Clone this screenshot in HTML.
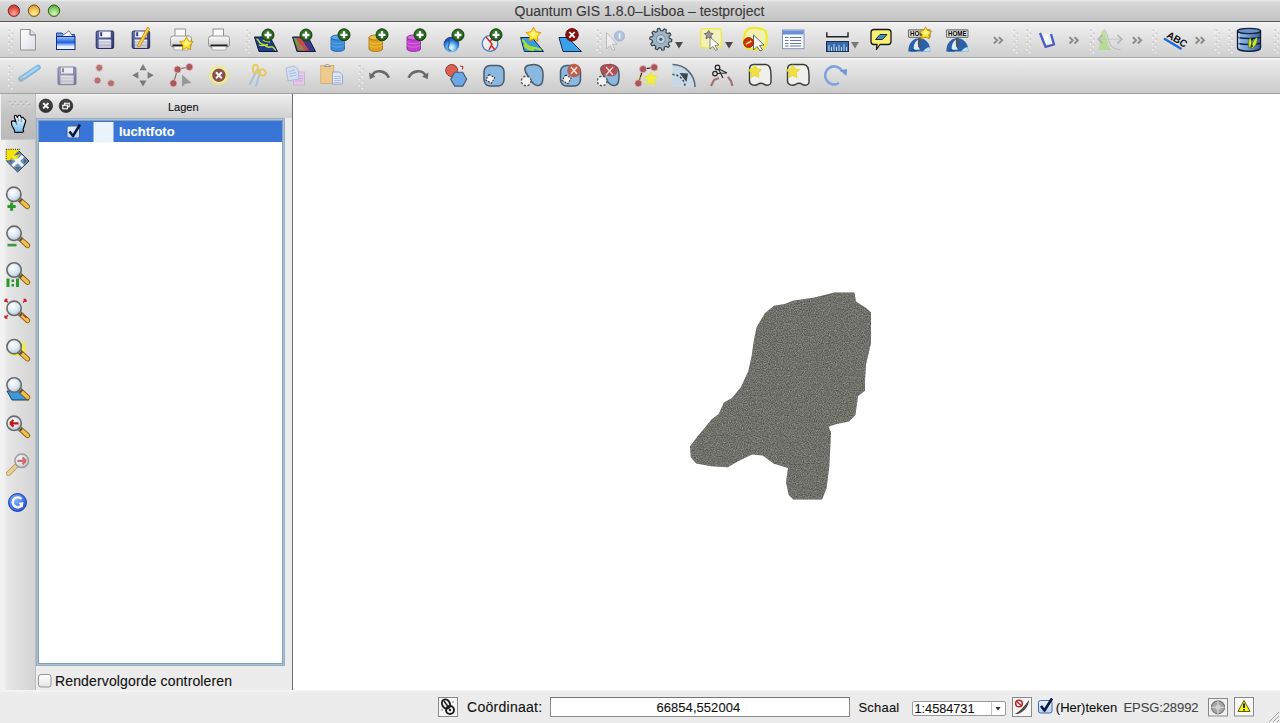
<!DOCTYPE html>
<html><head><meta charset="utf-8">
<style>
*{margin:0;padding:0;box-sizing:border-box}
html,body{width:1280px;height:723px;overflow:hidden;background:#ececec;font-family:"Liberation Sans",sans-serif;position:relative}
.abs{position:absolute}
.txt{position:absolute;white-space:nowrap;line-height:1;-webkit-text-stroke:0.12px currentColor}
#title{left:0;top:0;width:1280px;height:22px;background:linear-gradient(#ececec 0px,#d9d9d9 2px,#c2c2c2 21px);border-bottom:1px solid #555}
#tb1{left:0;top:22px;width:1280px;height:36px;background:linear-gradient(#f0f0f0,#cfcfcf);border-bottom:1px solid #a4a4a4;border-top:1px solid #f8f8f8}
#tb2{left:0;top:58px;width:1280px;height:36px;background:linear-gradient(#ececec,#cbcbcb);border-bottom:1px solid #a0a0a0;border-top:1px solid #fafafa}
#lefttb{left:0;top:94px;width:36px;height:597px;background:linear-gradient(90deg,#f2f2f2 0px,#f2f2f2 4px,#e6e6e6 7px,#d4d4d4 35px);border-right:1px solid #bdbdbd}
#panbtn{left:1px;top:94px;width:34px;height:46px;background:linear-gradient(#d6d6d6,#c6c6c6 40%,#b9b9b9);border-bottom:1px solid #c8c8c8}
#panel{left:36px;top:94px;width:256px;height:597px;background:#ececec}
#ptitle{left:0;top:0;width:256px;height:24px;background:linear-gradient(#fafafa 0px,#ececec 2px,#d2d2d2 23px)}
#tree{left:2px;top:26px;width:245px;height:544px;background:#fff;border:1px solid #86a0bc;box-shadow:0 0 0 1px #a8c2dc,0 0 0 2px #9cadc0}
#selrow{left:39px;top:121px;width:243px;height:21px;background:#3875d7}
#splitter{left:292px;top:94px;width:1px;height:597px;background:#6f6f6f}
#canvas{left:293px;top:94px;width:987px;height:597px;background:#fff}
#status{left:0;top:690px;width:1280px;height:33px;background:linear-gradient(#f6f6f6 0px,#ececec 3px)}

</style></head><body>
<div id="title" class="abs"></div>
<div class="txt" style="left:514.5px;top:4px;font-size:14px;letter-spacing:0px;color:#3a3a3a">Quantum GIS 1.8.0–Lisboa – testproject</div>
<div id="tb1" class="abs"></div>
<div id="tb2" class="abs"></div>
<div id="lefttb" class="abs"></div>
<div id="panbtn" class="abs"></div>
<div id="panel" class="abs">
  <div id="ptitle" class="abs"></div>
  <div id="tree" class="abs"></div>
</div>
<div class="txt" style="left:168px;top:102px;font-size:11px;color:#111">Lagen</div>
<div id="selrow" class="abs"></div>
<div class="txt" style="left:119px;top:125px;font-size:13px;font-weight:bold;color:#fff">luchtfoto</div>
<div class="txt" style="left:55px;top:674px;font-size:14px;letter-spacing:0.14px;color:#111">Rendervolgorde controleren</div>
<div id="splitter" class="abs"></div>
<div id="canvas" class="abs"></div>
<div id="status" class="abs"></div>
<div class="txt" style="left:467px;top:700px;font-size:14px;letter-spacing:0.28px;color:#111">Coördinaat:</div>
<div class="abs" style="left:550px;top:697px;width:300px;height:20px;background:#fff;border:1px solid #8a8a8a;border-top-color:#777"></div>
<div class="txt" style="left:656.5px;top:701px;font-size:13px;letter-spacing:0.05px;color:#111">66854,552004</div>
<div class="txt" style="left:858.5px;top:701px;font-size:13px;letter-spacing:0.2px;color:#111">Schaal</div>
<div class="abs" style="left:912px;top:701px;width:94px;height:15px;background:#fff;border:1px solid #9a9a9a;border-radius:2px"></div>
<div class="abs" style="left:991px;top:702px;width:1px;height:13px;background:#c8c8c8"></div>
<div class="txt" style="left:914.5px;top:703px;font-size:12.7px;color:#111">1:4584731</div>
<div class="txt" style="left:1055.8px;top:701px;font-size:13px;letter-spacing:0px;color:#111">(Her)teken</div>
<div class="txt" style="left:1123.5px;top:701px;font-size:13px;letter-spacing:-0.1px;color:#444">EPSG:28992</div>

<svg id="ov" width="1280" height="723" viewBox="0 0 1280 723" style="position:absolute;left:0;top:0">
<defs>
<radialGradient id="gred" cx="50%" cy="75%" r="70%"><stop offset="0" stop-color="#f8a8a0"/><stop offset="0.6" stop-color="#e45a4c"/><stop offset="1" stop-color="#c83a30"/></radialGradient>
<radialGradient id="gyel" cx="50%" cy="75%" r="70%"><stop offset="0" stop-color="#fff0a0"/><stop offset="0.6" stop-color="#f4c050"/><stop offset="1" stop-color="#d89a30"/></radialGradient>
<radialGradient id="ggrn" cx="50%" cy="75%" r="70%"><stop offset="0" stop-color="#d8f8b8"/><stop offset="0.6" stop-color="#90d070"/><stop offset="1" stop-color="#5aa840"/></radialGradient>
<radialGradient id="gplus" cx="45%" cy="40%" r="60%"><stop offset="0" stop-color="#3a8a30"/><stop offset="1" stop-color="#1e5418"/></radialGradient>
<linearGradient id="gdoc" x1="0" y1="0" x2="1" y2="1"><stop offset="0" stop-color="#ffffff"/><stop offset="1" stop-color="#dcdce8"/></linearGradient>
<linearGradient id="gfold" x1="0" y1="0" x2="0" y2="1"><stop offset="0" stop-color="#a8c8f8"/><stop offset="0.45" stop-color="#1a60e0"/><stop offset="0.75" stop-color="#e0e8ff"/><stop offset="1" stop-color="#f8f8ff"/></linearGradient>
<linearGradient id="gflop" x1="0" y1="0" x2="1" y2="1"><stop offset="0" stop-color="#6a78b0"/><stop offset="1" stop-color="#2a3068"/></linearGradient>
<linearGradient id="glabel" x1="0" y1="0" x2="0" y2="1"><stop offset="0" stop-color="#f0f0f8"/><stop offset="1" stop-color="#c0c0d4"/></linearGradient>
<linearGradient id="gprint" x1="0" y1="0" x2="0" y2="1"><stop offset="0" stop-color="#fafafa"/><stop offset="1" stop-color="#c8c8c8"/></linearGradient>
<radialGradient id="gstar" cx="50%" cy="50%" r="55%"><stop offset="0" stop-color="#ffffa0"/><stop offset="0.6" stop-color="#f8e020"/><stop offset="1" stop-color="#e8a800"/></radialGradient>
<radialGradient id="gglobe" cx="50%" cy="70%" r="60%"><stop offset="0" stop-color="#f0fcff"/><stop offset="0.35" stop-color="#8ad0f8"/><stop offset="0.75" stop-color="#2a78d0"/><stop offset="1" stop-color="#1a4aa0"/></radialGradient>
<linearGradient id="gdome" x1="0" y1="0" x2="0" y2="1"><stop offset="0" stop-color="#2a6ab8"/><stop offset="1" stop-color="#1a4a98"/></linearGradient>
<linearGradient id="gdb" x1="0" y1="0" x2="1" y2="0"><stop offset="0" stop-color="#9ac0ea"/><stop offset="0.5" stop-color="#6a98d0"/><stop offset="1" stop-color="#3a60a0"/></linearGradient>
<radialGradient id="glens" cx="40%" cy="35%" r="70%"><stop offset="0" stop-color="#ffffff"/><stop offset="0.6" stop-color="#d8e4f0"/><stop offset="1" stop-color="#a8b8c8"/></radialGradient>
<linearGradient id="ghand" x1="0" y1="0" x2="0" y2="1"><stop offset="0" stop-color="#f0f8ff"/><stop offset="1" stop-color="#78c0f0"/></linearGradient>
<radialGradient id="grefresh" cx="40%" cy="35%" r="70%"><stop offset="0" stop-color="#8ab8ff"/><stop offset="1" stop-color="#2050d0"/></radialGradient>
<linearGradient id="gchk" x1="0" y1="0" x2="0" y2="1"><stop offset="0" stop-color="#e8f2ff"/><stop offset="1" stop-color="#b8d4f4"/></linearGradient>
<linearGradient id="gchk0" x1="0" y1="0" x2="0" y2="1"><stop offset="0" stop-color="#ffffff"/><stop offset="1" stop-color="#e4e4e4"/></linearGradient>
<radialGradient id="gdbtn" cx="50%" cy="40%" r="60%"><stop offset="0" stop-color="#5a5a5a"/><stop offset="1" stop-color="#2a2a2a"/></radialGradient>
<filter id="mapnoise" x="0" y="0" width="100%" height="100%" filterUnits="objectBoundingBox" color-interpolation-filters="sRGB">
<feTurbulence type="fractalNoise" baseFrequency="0.85" numOctaves="2" seed="7" result="n"/>
<feColorMatrix in="n" type="matrix" values="1 0 0 0 0  1 0 0 0 0  1 0 0 0 0  0 0 0 0 1" result="g"/>
<feComponentTransfer in="g"><feFuncR type="linear" slope="1.15" intercept="-0.07"/><feFuncG type="linear" slope="1.15" intercept="-0.06"/><feFuncB type="linear" slope="1.15" intercept="-0.09"/></feComponentTransfer>
</filter>
</defs>
<circle cx="13.9" cy="10.7" r="5.7" fill="url(#gred)" stroke="#6a2a2a" stroke-width="1"/><circle cx="34" cy="10.7" r="5.7" fill="url(#gyel)" stroke="#6a5018" stroke-width="1"/><circle cx="54" cy="10.7" r="5.7" fill="url(#ggrn)" stroke="#2a5a1a" stroke-width="1"/><circle cx="9.3" cy="30.3" r="1.1" fill="#cdcdcd"/><circle cx="8.8" cy="31.8" r="0.8" fill="#fbfbfb"/><circle cx="12.3" cy="33.3" r="1.1" fill="#d0d0d0"/><circle cx="11.8" cy="34.8" r="0.8" fill="#fbfbfb"/><circle cx="9.3" cy="36.3" r="1.1" fill="#cdcdcd"/><circle cx="8.8" cy="37.8" r="0.8" fill="#fbfbfb"/><circle cx="12.3" cy="39.3" r="1.1" fill="#d0d0d0"/><circle cx="11.8" cy="40.8" r="0.8" fill="#fbfbfb"/><circle cx="9.3" cy="42.3" r="1.1" fill="#cdcdcd"/><circle cx="8.8" cy="43.8" r="0.8" fill="#fbfbfb"/><circle cx="12.3" cy="45.3" r="1.1" fill="#d0d0d0"/><circle cx="11.8" cy="46.8" r="0.8" fill="#fbfbfb"/><circle cx="9.3" cy="48.3" r="1.1" fill="#cdcdcd"/><circle cx="8.8" cy="49.8" r="0.8" fill="#fbfbfb"/><circle cx="12.3" cy="51.3" r="1.1" fill="#d0d0d0"/><circle cx="11.8" cy="52.8" r="0.8" fill="#fbfbfb"/><circle cx="246.8" cy="30.3" r="1.1" fill="#cdcdcd"/><circle cx="246.3" cy="31.8" r="0.8" fill="#fbfbfb"/><circle cx="249.8" cy="33.3" r="1.1" fill="#d0d0d0"/><circle cx="249.3" cy="34.8" r="0.8" fill="#fbfbfb"/><circle cx="246.8" cy="36.3" r="1.1" fill="#cdcdcd"/><circle cx="246.3" cy="37.8" r="0.8" fill="#fbfbfb"/><circle cx="249.8" cy="39.3" r="1.1" fill="#d0d0d0"/><circle cx="249.3" cy="40.8" r="0.8" fill="#fbfbfb"/><circle cx="246.8" cy="42.3" r="1.1" fill="#cdcdcd"/><circle cx="246.3" cy="43.8" r="0.8" fill="#fbfbfb"/><circle cx="249.8" cy="45.3" r="1.1" fill="#d0d0d0"/><circle cx="249.3" cy="46.8" r="0.8" fill="#fbfbfb"/><circle cx="246.8" cy="48.3" r="1.1" fill="#cdcdcd"/><circle cx="246.3" cy="49.8" r="0.8" fill="#fbfbfb"/><circle cx="249.8" cy="51.3" r="1.1" fill="#d0d0d0"/><circle cx="249.3" cy="52.8" r="0.8" fill="#fbfbfb"/><circle cx="597.8" cy="30.3" r="1.1" fill="#cdcdcd"/><circle cx="597.3" cy="31.8" r="0.8" fill="#fbfbfb"/><circle cx="600.8" cy="33.3" r="1.1" fill="#d0d0d0"/><circle cx="600.3" cy="34.8" r="0.8" fill="#fbfbfb"/><circle cx="597.8" cy="36.3" r="1.1" fill="#cdcdcd"/><circle cx="597.3" cy="37.8" r="0.8" fill="#fbfbfb"/><circle cx="600.8" cy="39.3" r="1.1" fill="#d0d0d0"/><circle cx="600.3" cy="40.8" r="0.8" fill="#fbfbfb"/><circle cx="597.8" cy="42.3" r="1.1" fill="#cdcdcd"/><circle cx="597.3" cy="43.8" r="0.8" fill="#fbfbfb"/><circle cx="600.8" cy="45.3" r="1.1" fill="#d0d0d0"/><circle cx="600.3" cy="46.8" r="0.8" fill="#fbfbfb"/><circle cx="597.8" cy="48.3" r="1.1" fill="#cdcdcd"/><circle cx="597.3" cy="49.8" r="0.8" fill="#fbfbfb"/><circle cx="600.8" cy="51.3" r="1.1" fill="#d0d0d0"/><circle cx="600.3" cy="52.8" r="0.8" fill="#fbfbfb"/><circle cx="1014.3" cy="30.3" r="1.1" fill="#cdcdcd"/><circle cx="1013.8" cy="31.8" r="0.8" fill="#fbfbfb"/><circle cx="1017.3" cy="33.3" r="1.1" fill="#d0d0d0"/><circle cx="1016.8" cy="34.8" r="0.8" fill="#fbfbfb"/><circle cx="1014.3" cy="36.3" r="1.1" fill="#cdcdcd"/><circle cx="1013.8" cy="37.8" r="0.8" fill="#fbfbfb"/><circle cx="1017.3" cy="39.3" r="1.1" fill="#d0d0d0"/><circle cx="1016.8" cy="40.8" r="0.8" fill="#fbfbfb"/><circle cx="1014.3" cy="42.3" r="1.1" fill="#cdcdcd"/><circle cx="1013.8" cy="43.8" r="0.8" fill="#fbfbfb"/><circle cx="1017.3" cy="45.3" r="1.1" fill="#d0d0d0"/><circle cx="1016.8" cy="46.8" r="0.8" fill="#fbfbfb"/><circle cx="1014.3" cy="48.3" r="1.1" fill="#cdcdcd"/><circle cx="1013.8" cy="49.8" r="0.8" fill="#fbfbfb"/><circle cx="1017.3" cy="51.3" r="1.1" fill="#d0d0d0"/><circle cx="1016.8" cy="52.8" r="0.8" fill="#fbfbfb"/><circle cx="1027.3" cy="30.3" r="1.1" fill="#cdcdcd"/><circle cx="1026.8" cy="31.8" r="0.8" fill="#fbfbfb"/><circle cx="1030.3" cy="33.3" r="1.1" fill="#d0d0d0"/><circle cx="1029.8" cy="34.8" r="0.8" fill="#fbfbfb"/><circle cx="1027.3" cy="36.3" r="1.1" fill="#cdcdcd"/><circle cx="1026.8" cy="37.8" r="0.8" fill="#fbfbfb"/><circle cx="1030.3" cy="39.3" r="1.1" fill="#d0d0d0"/><circle cx="1029.8" cy="40.8" r="0.8" fill="#fbfbfb"/><circle cx="1027.3" cy="42.3" r="1.1" fill="#cdcdcd"/><circle cx="1026.8" cy="43.8" r="0.8" fill="#fbfbfb"/><circle cx="1030.3" cy="45.3" r="1.1" fill="#d0d0d0"/><circle cx="1029.8" cy="46.8" r="0.8" fill="#fbfbfb"/><circle cx="1027.3" cy="48.3" r="1.1" fill="#cdcdcd"/><circle cx="1026.8" cy="49.8" r="0.8" fill="#fbfbfb"/><circle cx="1030.3" cy="51.3" r="1.1" fill="#d0d0d0"/><circle cx="1029.8" cy="52.8" r="0.8" fill="#fbfbfb"/><circle cx="1090.8" cy="30.3" r="1.1" fill="#cdcdcd"/><circle cx="1090.3" cy="31.8" r="0.8" fill="#fbfbfb"/><circle cx="1093.8" cy="33.3" r="1.1" fill="#d0d0d0"/><circle cx="1093.3" cy="34.8" r="0.8" fill="#fbfbfb"/><circle cx="1090.8" cy="36.3" r="1.1" fill="#cdcdcd"/><circle cx="1090.3" cy="37.8" r="0.8" fill="#fbfbfb"/><circle cx="1093.8" cy="39.3" r="1.1" fill="#d0d0d0"/><circle cx="1093.3" cy="40.8" r="0.8" fill="#fbfbfb"/><circle cx="1090.8" cy="42.3" r="1.1" fill="#cdcdcd"/><circle cx="1090.3" cy="43.8" r="0.8" fill="#fbfbfb"/><circle cx="1093.8" cy="45.3" r="1.1" fill="#d0d0d0"/><circle cx="1093.3" cy="46.8" r="0.8" fill="#fbfbfb"/><circle cx="1090.8" cy="48.3" r="1.1" fill="#cdcdcd"/><circle cx="1090.3" cy="49.8" r="0.8" fill="#fbfbfb"/><circle cx="1093.8" cy="51.3" r="1.1" fill="#d0d0d0"/><circle cx="1093.3" cy="52.8" r="0.8" fill="#fbfbfb"/><circle cx="1153.3" cy="30.3" r="1.1" fill="#cdcdcd"/><circle cx="1152.8" cy="31.8" r="0.8" fill="#fbfbfb"/><circle cx="1156.3" cy="33.3" r="1.1" fill="#d0d0d0"/><circle cx="1155.8" cy="34.8" r="0.8" fill="#fbfbfb"/><circle cx="1153.3" cy="36.3" r="1.1" fill="#cdcdcd"/><circle cx="1152.8" cy="37.8" r="0.8" fill="#fbfbfb"/><circle cx="1156.3" cy="39.3" r="1.1" fill="#d0d0d0"/><circle cx="1155.8" cy="40.8" r="0.8" fill="#fbfbfb"/><circle cx="1153.3" cy="42.3" r="1.1" fill="#cdcdcd"/><circle cx="1152.8" cy="43.8" r="0.8" fill="#fbfbfb"/><circle cx="1156.3" cy="45.3" r="1.1" fill="#d0d0d0"/><circle cx="1155.8" cy="46.8" r="0.8" fill="#fbfbfb"/><circle cx="1153.3" cy="48.3" r="1.1" fill="#cdcdcd"/><circle cx="1152.8" cy="49.8" r="0.8" fill="#fbfbfb"/><circle cx="1156.3" cy="51.3" r="1.1" fill="#d0d0d0"/><circle cx="1155.8" cy="52.8" r="0.8" fill="#fbfbfb"/><circle cx="1216.3" cy="30.3" r="1.1" fill="#cdcdcd"/><circle cx="1215.8" cy="31.8" r="0.8" fill="#fbfbfb"/><circle cx="1219.3" cy="33.3" r="1.1" fill="#d0d0d0"/><circle cx="1218.8" cy="34.8" r="0.8" fill="#fbfbfb"/><circle cx="1216.3" cy="36.3" r="1.1" fill="#cdcdcd"/><circle cx="1215.8" cy="37.8" r="0.8" fill="#fbfbfb"/><circle cx="1219.3" cy="39.3" r="1.1" fill="#d0d0d0"/><circle cx="1218.8" cy="40.8" r="0.8" fill="#fbfbfb"/><circle cx="1216.3" cy="42.3" r="1.1" fill="#cdcdcd"/><circle cx="1215.8" cy="43.8" r="0.8" fill="#fbfbfb"/><circle cx="1219.3" cy="45.3" r="1.1" fill="#d0d0d0"/><circle cx="1218.8" cy="46.8" r="0.8" fill="#fbfbfb"/><circle cx="1216.3" cy="48.3" r="1.1" fill="#cdcdcd"/><circle cx="1215.8" cy="49.8" r="0.8" fill="#fbfbfb"/><circle cx="1219.3" cy="51.3" r="1.1" fill="#d0d0d0"/><circle cx="1218.8" cy="52.8" r="0.8" fill="#fbfbfb"/><circle cx="1229.3" cy="30.3" r="1.1" fill="#cdcdcd"/><circle cx="1228.8" cy="31.8" r="0.8" fill="#fbfbfb"/><circle cx="1232.3" cy="33.3" r="1.1" fill="#d0d0d0"/><circle cx="1231.8" cy="34.8" r="0.8" fill="#fbfbfb"/><circle cx="1229.3" cy="36.3" r="1.1" fill="#cdcdcd"/><circle cx="1228.8" cy="37.8" r="0.8" fill="#fbfbfb"/><circle cx="1232.3" cy="39.3" r="1.1" fill="#d0d0d0"/><circle cx="1231.8" cy="40.8" r="0.8" fill="#fbfbfb"/><circle cx="1229.3" cy="42.3" r="1.1" fill="#cdcdcd"/><circle cx="1228.8" cy="43.8" r="0.8" fill="#fbfbfb"/><circle cx="1232.3" cy="45.3" r="1.1" fill="#d0d0d0"/><circle cx="1231.8" cy="46.8" r="0.8" fill="#fbfbfb"/><circle cx="1229.3" cy="48.3" r="1.1" fill="#cdcdcd"/><circle cx="1228.8" cy="49.8" r="0.8" fill="#fbfbfb"/><circle cx="1232.3" cy="51.3" r="1.1" fill="#d0d0d0"/><circle cx="1231.8" cy="52.8" r="0.8" fill="#fbfbfb"/><circle cx="1275.3" cy="30.3" r="1.1" fill="#cdcdcd"/><circle cx="1274.8" cy="31.8" r="0.8" fill="#fbfbfb"/><circle cx="1278.3" cy="33.3" r="1.1" fill="#d0d0d0"/><circle cx="1277.8" cy="34.8" r="0.8" fill="#fbfbfb"/><circle cx="1275.3" cy="36.3" r="1.1" fill="#cdcdcd"/><circle cx="1274.8" cy="37.8" r="0.8" fill="#fbfbfb"/><circle cx="1278.3" cy="39.3" r="1.1" fill="#d0d0d0"/><circle cx="1277.8" cy="40.8" r="0.8" fill="#fbfbfb"/><circle cx="1275.3" cy="42.3" r="1.1" fill="#cdcdcd"/><circle cx="1274.8" cy="43.8" r="0.8" fill="#fbfbfb"/><circle cx="1278.3" cy="45.3" r="1.1" fill="#d0d0d0"/><circle cx="1277.8" cy="46.8" r="0.8" fill="#fbfbfb"/><circle cx="1275.3" cy="48.3" r="1.1" fill="#cdcdcd"/><circle cx="1274.8" cy="49.8" r="0.8" fill="#fbfbfb"/><circle cx="1278.3" cy="51.3" r="1.1" fill="#d0d0d0"/><circle cx="1277.8" cy="52.8" r="0.8" fill="#fbfbfb"/><path d="M20.5,29.5 H30 L35.5,35 V50 H20.5 Z" fill="url(#gdoc)" stroke="#8a8a8a" stroke-width="0.9"/><path d="M30,29.5 V35 H35.5" fill="#e4e4e4" stroke="#6a6a6a" stroke-width="0.9"/><path d="M56.5,49.5 V33 H62 L63.5,34.5 H74.5 V49.5 Z" fill="#6a9ae0" stroke="#1a3a9a" stroke-width="0.9"/><path d="M59,38 L69,30.8 L73.5,37 Z" fill="#f8f8ff" stroke="#556" stroke-width="0.7"/><rect x="56.5" y="36.5" width="18.5" height="13" fill="url(#gfold)" stroke="#102e90" stroke-width="1"/><g><rect x="96.2" y="31" width="17.5" height="17.5" rx="1.5" fill="url(#gflop)" stroke="#1e2552" stroke-width="0.9"/><rect x="99.2" y="31.5" width="11.5" height="6" fill="#f4f6fc"/><rect x="100.2" y="32.2" width="2" height="4" fill="#3a4070"/><rect x="98.7" y="39.5" width="12.5" height="8.5" fill="url(#glabel)"/><path d="M98.7,42H111.2M98.7,45H111.2" stroke="#9da0b8" stroke-width="0.8"/></g><g><rect x="132.2" y="31" width="17.5" height="17.5" rx="1.5" fill="url(#gflop)" stroke="#1e2552" stroke-width="0.9"/><rect x="135.2" y="31.5" width="11.5" height="6" fill="#f4f6fc"/><rect x="136.2" y="32.2" width="2" height="4" fill="#3a4070"/><rect x="134.7" y="39.5" width="12.5" height="8.5" fill="url(#glabel)"/><path d="M134.7,42H147.2M134.7,45H147.2" stroke="#9da0b8" stroke-width="0.8"/></g><path d="M139,45.5 L148,29" stroke="#c88a10" stroke-width="3.6" stroke-linecap="round"/><path d="M139,45.5 L148,29" stroke="#f8d040" stroke-width="2" stroke-linecap="round"/><rect x="175" y="29" width="10.5" height="8" fill="#fafafa" stroke="#8a8a8a" stroke-width="0.9"/><rect x="170.5" y="36" width="21" height="11" rx="2.5" fill="url(#gprint)" stroke="#8c8c8c" stroke-width="0.9"/><rect x="172.5" y="44.5" width="17" height="2" fill="#222"/><rect x="174" y="46.5" width="14" height="3.5" fill="#f6f6f6" stroke="#999" stroke-width="0.7"/><polygon points="186.50,36.80 188.70,40.97 193.35,41.78 190.06,45.16 190.73,49.82 186.50,47.74 182.27,49.82 182.94,45.16 179.65,41.78 184.30,40.97" fill="url(#gstar)" stroke="#d09000" stroke-width="0.8" stroke-linejoin="round"/><rect x="213" y="29" width="10.5" height="8" fill="#fafafa" stroke="#8a8a8a" stroke-width="0.9"/><rect x="208.5" y="36" width="21" height="11" rx="2.5" fill="url(#gprint)" stroke="#8c8c8c" stroke-width="0.9"/><rect x="210.5" y="44.5" width="17" height="2" fill="#222"/><rect x="212" y="46.5" width="14" height="3.5" fill="#f6f6f6" stroke="#999" stroke-width="0.7"/><polygon points="254.5,37 270,37 277.5,51.5 259,51.5" fill="#1d3c8c" stroke="#0c1a40" stroke-width="1"/><path d="M256.5,39 C260,40 258,43 262,44 S266,48 270,47 S274,49 276,50.5 M259,45 C262,47 265,44 268,45 M263,40 C265,42 268,41 270,42" fill="none" stroke="#c0e030" stroke-width="1.5"/><circle cx="268" cy="35" r="6.0" fill="url(#gplus)" stroke="#1c3f12" stroke-width="1"/><path d="M264.5,35H271.5M268,31.5V38.5" stroke="#fff" stroke-width="2.3"/><polygon points="292.5,37 308,37 315.5,51.5 297,51.5" fill="#3a3a8a" stroke="#1a1a30" stroke-width="1"/><polygon points="294,38 301,38 309,50.5 300,50.5" fill="#c84a4a"/><polygon points="293.5,38 296,38 300,45 296,45" fill="#6aa040"/><polygon points="296,45 302,45 305,50.5 298,50.5" fill="#a07a50"/><circle cx="306" cy="35" r="6.0" fill="url(#gplus)" stroke="#1c3f12" stroke-width="1"/><path d="M302.5,35H309.5M306,31.5V38.5" stroke="#fff" stroke-width="2.3"/><path d="M331,37.5 V49.0 A6.75,2.5 0 0 0 344.5,49.0 V37.5 Z" fill="#3a8ad8" stroke="#1a5aa0" stroke-width="0.8"/><path d="M331,41.295 A6.75,2.5 0 0 0 344.5,41.295" fill="none" stroke="#5aa8ea" stroke-width="1"/><path d="M331,44.63 A6.75,2.5 0 0 0 344.5,44.63" fill="none" stroke="#5aa8ea" stroke-width="1"/><ellipse cx="337.75" cy="37.5" rx="6.75" ry="2.5" fill="#5aa8ea" stroke="#1a5aa0" stroke-width="0.8"/><circle cx="344" cy="34.8" r="6.0" fill="url(#gplus)" stroke="#1c3f12" stroke-width="1"/><path d="M340.5,34.8H347.5M344,31.299999999999997V38.3" stroke="#fff" stroke-width="2.3"/><path d="M369,37.5 V49.0 A6.75,2.5 0 0 0 382.5,49.0 V37.5 Z" fill="#e0a020" stroke="#a07010" stroke-width="0.8"/><path d="M369,41.295 A6.75,2.5 0 0 0 382.5,41.295" fill="none" stroke="#f0c040" stroke-width="1"/><path d="M369,44.63 A6.75,2.5 0 0 0 382.5,44.63" fill="none" stroke="#f0c040" stroke-width="1"/><ellipse cx="375.75" cy="37.5" rx="6.75" ry="2.5" fill="#f0c040" stroke="#a07010" stroke-width="0.8"/><circle cx="382" cy="34.8" r="6.0" fill="url(#gplus)" stroke="#1c3f12" stroke-width="1"/><path d="M378.5,34.8H385.5M382,31.299999999999997V38.3" stroke="#fff" stroke-width="2.3"/><path d="M407,37.5 V49.0 A6.75,2.5 0 0 0 420.5,49.0 V37.5 Z" fill="#c040d0" stroke="#8a2090" stroke-width="0.8"/><path d="M407,41.295 A6.75,2.5 0 0 0 420.5,41.295" fill="none" stroke="#d870e0" stroke-width="1"/><path d="M407,44.63 A6.75,2.5 0 0 0 420.5,44.63" fill="none" stroke="#d870e0" stroke-width="1"/><ellipse cx="413.75" cy="37.5" rx="6.75" ry="2.5" fill="#d870e0" stroke="#8a2090" stroke-width="0.8"/><circle cx="420" cy="34.8" r="6.0" fill="url(#gplus)" stroke="#1c3f12" stroke-width="1"/><path d="M416.5,34.8H423.5M420,31.299999999999997V38.3" stroke="#fff" stroke-width="2.3"/><circle cx="451.4" cy="44.5" r="7.8" fill="url(#gglobe)"/><path d="M445,42 C447,38 450,40 449,44 S447,49 451,51" fill="none" stroke="#1a4a98" stroke-width="1.4" opacity="0.7"/><circle cx="458" cy="35" r="6.0" fill="url(#gplus)" stroke="#1c3f12" stroke-width="1"/><path d="M454.5,35H461.5M458,31.5V38.5" stroke="#fff" stroke-width="2.3"/><circle cx="490" cy="43.5" r="7.8" fill="#fff" fill-opacity="0.5" stroke="#4a7ad0" stroke-width="1.3"/><path d="M486,37 L492,44 L489,50 M490,41 L494,38 M491,45 L495,50" fill="none" stroke="#d83030" stroke-width="1.6"/><circle cx="496" cy="34.8" r="6.0" fill="url(#gplus)" stroke="#1c3f12" stroke-width="1"/><path d="M492.5,34.8H499.5M496,31.299999999999997V38.3" stroke="#fff" stroke-width="2.3"/><polygon points="520.6,37.5 532,37.5 543.6,51.5 524.4,51.5" fill="#3a9ae0" stroke="#0c2a50" stroke-width="1"/><path d="M522,40 C526,42 525,46 530,47 S537,48 541,50 M524,45 C527,49 531,50 534,50" fill="none" stroke="#a8e030" stroke-width="2.2"/><polygon points="533.50,27.20 535.88,31.72 540.92,32.59 537.36,36.25 538.08,41.31 533.50,39.06 528.92,41.31 529.64,36.25 526.08,32.59 531.12,31.72" fill="url(#gstar)" stroke="#d09000" stroke-width="0.8" stroke-linejoin="round"/><polygon points="559,37.5 567.5,37.5 581.5,51.5 563,51.5" fill="#3aa0e8" stroke="#0c2a50" stroke-width="1"/><circle cx="572" cy="34.8" r="6.3" fill="#8a1010" stroke="#500" stroke-width="0.8"/><path d="M569.3,32 L574.7,37.6 M574.7,32 L569.3,37.6" stroke="#fff" stroke-width="1.8"/><g opacity="0.45"><path d="M606.5,32.5 V49 L610,45.5 L613,50.5 L615,49.5 L612.5,44.5 L617,44 Z" fill="#fff" stroke="#888" stroke-width="0.9"/><circle cx="619.5" cy="36" r="5.2" fill="#6a9ad8" stroke="#4a6aa0" stroke-width="0.6"/><rect x="618.7" y="33.2" width="1.8" height="5.6" fill="#fff"/></g><polygon points="671.80,39.30 671.74,40.45 671.56,41.59 668.98,41.96 668.66,42.80 668.25,43.60 669.70,45.77 668.97,46.66 668.16,47.47 665.85,46.26 665.10,46.75 664.30,47.16 664.20,49.76 663.09,50.06 661.95,50.24 660.80,47.90 659.90,47.85 659.01,47.71 657.40,49.76 656.33,49.35 655.30,48.83 655.75,46.26 655.05,45.69 654.41,45.05 651.90,45.77 651.27,44.80 650.75,43.77 652.62,41.96 652.39,41.09 652.25,40.20 649.80,39.30 649.86,38.15 650.04,37.01 652.62,36.64 652.94,35.80 653.35,35.00 651.90,32.83 652.63,31.94 653.44,31.13 655.75,32.34 656.50,31.85 657.30,31.44 657.40,28.84 658.51,28.54 659.65,28.36 660.80,30.70 661.70,30.75 662.59,30.89 664.20,28.84 665.27,29.25 666.30,29.77 665.85,32.34 666.55,32.91 667.19,33.55 669.70,32.83 670.33,33.80 670.85,34.83 668.98,36.64 669.21,37.51 669.35,38.40" fill="#9fb4c4" stroke="#3a4650" stroke-width="1.2" stroke-linejoin="round"/><circle cx="660.8" cy="39.3" r="4.5" fill="#b8d0e0" stroke="#6a8090" stroke-width="0.8"/><circle cx="660.8" cy="39.3" r="1.6" fill="#4a5a68"/><path d="M675,42 H683 L679,48.5 Z" fill="#4a4a4a"/><rect x="700.5" y="28.8" width="21" height="19" rx="3" fill="#f6f4c0" stroke="#eeea50" stroke-width="1.6" opacity="0.9"/><path d="M703,32 V46 M706,31 V47 M709,30 V47 M712,30 V47 M715,30 V47 M718,31 V46" stroke="#f0ec90" stroke-width="0.8" opacity="0.6"/><polygon points="708.70,30.40 710.11,33.06 713.07,33.58 710.97,35.74 711.40,38.72 708.70,37.39 706.00,38.72 706.43,35.74 704.33,33.58 707.29,33.06" fill="#9a9a9a" stroke="#555" stroke-width="0.8" stroke-linejoin="round"/><path d="M710,37 V49 L713,46.5 L715.5,50.5 L717.5,49.5 L715,45.5 L719,45 Z" fill="#fafafa" stroke="#666" stroke-width="0.8"/><path d="M725,42 H733 L729,48.5 Z" fill="#4a4a4a"/><path d="M748,29 C754,27 762,28 765.5,31 C767.5,36 767,44 764,48 C758,50 750,50 745,47 C743,41 743.5,33 748,29 Z" fill="#f4f2b0" stroke="#f0ec20" stroke-width="2.2" opacity="0.95"/><path d="M753.5,35 V50 L757,46.5 L760,51 L762.5,49.8 L759.5,45.5 L764,45 Z" fill="#fafafa" stroke="#555" stroke-width="0.9"/><circle cx="748.6" cy="42.6" r="5" fill="#c83010" stroke="#a02000" stroke-width="0.8"/><path d="M745.8,44.2 L751.4,41" stroke="#f8d070" stroke-width="1.8"/><rect x="782.5" y="30" width="21.5" height="18.7" fill="#f8fbff" stroke="#7a8ab0" stroke-width="0.9"/><rect x="783" y="30.5" width="20.5" height="4" fill="#6a90d8"/><path d="M785,37.5H788.5 M790,37.5H801" stroke="#5a6a8a" stroke-width="0.9"/><path d="M785,40.5H788.5 M790,40.5H801" stroke="#5a6a8a" stroke-width="0.9"/><path d="M785,43.5H788.5 M790,43.5H801" stroke="#5a6a8a" stroke-width="0.9"/><path d="M785,46H788.5 M790,46H801" stroke="#5a6a8a" stroke-width="0.9"/><path d="M826.8,32.3 V36.8 H848 V32.3" fill="none" stroke="#222" stroke-width="1.4"/><rect x="826.5" y="41.5" width="22" height="10" fill="#3a6aa8" stroke="#1a3050" stroke-width="1"/><path d="M829,51 V45 M831.5,51 V47 M834,51 V44 M836.5,51 V47 M839,51 V45 M841.5,51 V47 M844,51 V44 M846.5,51 V47" stroke="#c8e0f8" stroke-width="0.9"/><path d="M851,42 H859 L855,48.5 Z" fill="#777"/><path d="M874,29.5 H888 Q891,29.5 891,32.5 V41.5 Q891,44.5 888,44.5 H880 L876.5,49.5 L877,44.5 H874 Q871,44.5 871,41.5 V32.5 Q871,29.5 874,29.5 Z" fill="#f8f070" stroke="#1a1a1a" stroke-width="1.3" stroke-linejoin="round"/><polygon points="875.5,39.5 880,34.5 887,34.5 882.5,39.5" fill="#4a8ab8" stroke="#1a3040" stroke-width="1"/><path d="M908.3,51.5 C908.3,43 913,38.3 919.25,38.3 C925.5,38.3 930.3,43 930.3,51.5 Z" fill="#2a62aa"/><path d="M914,50 C913,46 915,41 918,40 C917.5,44 918,47 920,49.5 Z" fill="#dceefa"/><path d="M923,51.5 C925,49 927,47.5 929.5,47 L930.3,51.5 Z" fill="#b8e0f8"/><path d="M910,51.5 C911,49 913,48.5 916,50 L917,51.5 Z" fill="#1a4a90"/><rect x="918.2" y="37" width="2.4" height="10" fill="#555"/><rect x="908.5" y="29.8" width="21.5" height="7.5" rx="0.8" fill="#e4e4e4" stroke="#777" stroke-width="1.2"/><text x="919.25" y="36.1" text-anchor="middle" font-family="Liberation Sans" font-weight="bold" font-size="7.4" fill="#000" textLength="18.5" lengthAdjust="spacingAndGlyphs">HOME</text><path d="M946.3,51.5 C946.3,43 951,38.3 957.25,38.3 C963.5,38.3 968.3,43 968.3,51.5 Z" fill="#2a62aa"/><path d="M952,50 C951,46 953,41 956,40 C955.5,44 956,47 958,49.5 Z" fill="#dceefa"/><path d="M961,51.5 C963,49 965,47.5 967.5,47 L968.3,51.5 Z" fill="#b8e0f8"/><path d="M948,51.5 C949,49 951,48.5 954,50 L955,51.5 Z" fill="#1a4a90"/><rect x="956.2" y="37" width="2.4" height="10" fill="#555"/><rect x="946.5" y="29.8" width="21.5" height="7.5" rx="0.8" fill="#e4e4e4" stroke="#777" stroke-width="1.2"/><text x="957.25" y="36.1" text-anchor="middle" font-family="Liberation Sans" font-weight="bold" font-size="7.4" fill="#000" textLength="18.5" lengthAdjust="spacingAndGlyphs">HOME</text><polygon points="925.50,26.70 927.58,30.64 931.97,31.40 928.86,34.59 929.50,39.00 925.50,37.04 921.50,39.00 922.14,34.59 919.03,31.40 923.42,30.64" fill="url(#gstar)" stroke="#d09000" stroke-width="0.8" stroke-linejoin="round"/><path d="M993.9,37.099999999999994 L997.1999999999999,40.3 L993.9,43.5 M998.9,37.099999999999994 L1002.1999999999999,40.3 L998.9,43.5" fill="none" stroke="#8a8a8a" stroke-width="1.9"/><path d="M1069.5,37.099999999999994 L1072.8,40.3 L1069.5,43.5 M1074.5,37.099999999999994 L1077.8,40.3 L1074.5,43.5" fill="none" stroke="#8a8a8a" stroke-width="1.9"/><path d="M1132.8,37.099999999999994 L1136.1,40.3 L1132.8,43.5 M1137.8,37.099999999999994 L1141.1,40.3 L1137.8,43.5" fill="none" stroke="#8a8a8a" stroke-width="1.9"/><path d="M1195.7,37.099999999999994 L1199.0,40.3 L1195.7,43.5 M1200.7,37.099999999999994 L1204.0,40.3 L1200.7,43.5" fill="none" stroke="#8a8a8a" stroke-width="1.9"/><path d="M1041,33.5 L1050.5,34.5 L1053,44 L1046,46 Z" fill="#e8f0ff"/><path d="M1047,33 L1049,40 L1046,44 L1044.5,38 Z" fill="#ffffff"/><path d="M1040,33 L1045.5,46.8 L1054,44.5 L1051,34" fill="none" stroke="#4a5ac4" stroke-width="2.3" stroke-linejoin="round"/><g opacity="0.45"><path d="M1098.5,50 C1100,46 1100,31 1103.5,29.5 C1107,30 1106.5,44 1111,50 Z" fill="#90d848"/><path d="M1104,29.5 C1108,31 1108,44 1112,47 C1115,49 1118,49.5 1120.5,49.5" fill="none" stroke="#8a8a8a" stroke-width="0.9"/><path d="M1102.5,35 L1098.3,39.2 L1102.5,43.5 M1117.5,35 L1121.8,39.2 L1117.5,43.5" fill="none" stroke="#7a7a7a" stroke-width="1.6"/><path d="M1099,39.2 H1121" stroke="#9a9a9a" stroke-width="0.8"/></g><path d="M1164,38.5 L1181.5,49" stroke="#1a6ae0" stroke-width="2.4"/><text x="0" y="0" font-family="Liberation Sans" font-weight="bold" font-size="10" fill="#111" transform="translate(1166,37) rotate(30)">ABC</text><path d="M1237.5,31 V48 A11.5,3.2 0 0 0 1260.5,48 V31 Z" fill="url(#gdb)" stroke="#14223e" stroke-width="1.4"/><path d="M1237.5,37.5 Q1249,39.5 1260.5,37.5 M1237.5,43.5 Q1249,45.5 1260.5,43.5" fill="none" stroke="#14223e" stroke-width="1.3"/><ellipse cx="1249" cy="31" rx="11.5" ry="2.6" fill="#6a90c8" stroke="#14223e" stroke-width="1.4"/><path d="M1239,33 V47" stroke="#e8f0ff" stroke-width="1.2" opacity="0.6"/><path d="M1249,48 C1248,44 1248,40 1250.5,37.5 C1252,41 1252,45 1250,48 Z M1251,48 C1252,43 1254,39 1257,37 C1258,42 1256,46 1252,48.5 Z" fill="#d8e828" stroke="#3a6a10" stroke-width="0.7"/><circle cx="1252" cy="39.5" r="0.9" fill="#111"/><circle cx="1252" cy="46" r="0.9" fill="#111"/><circle cx="9.3" cy="66.3" r="1.1" fill="#cdcdcd"/><circle cx="8.8" cy="67.8" r="0.8" fill="#fbfbfb"/><circle cx="12.3" cy="69.3" r="1.1" fill="#d0d0d0"/><circle cx="11.8" cy="70.8" r="0.8" fill="#fbfbfb"/><circle cx="9.3" cy="72.3" r="1.1" fill="#cdcdcd"/><circle cx="8.8" cy="73.8" r="0.8" fill="#fbfbfb"/><circle cx="12.3" cy="75.3" r="1.1" fill="#d0d0d0"/><circle cx="11.8" cy="76.8" r="0.8" fill="#fbfbfb"/><circle cx="9.3" cy="78.3" r="1.1" fill="#cdcdcd"/><circle cx="8.8" cy="79.8" r="0.8" fill="#fbfbfb"/><circle cx="12.3" cy="81.3" r="1.1" fill="#d0d0d0"/><circle cx="11.8" cy="82.8" r="0.8" fill="#fbfbfb"/><circle cx="9.3" cy="84.3" r="1.1" fill="#cdcdcd"/><circle cx="8.8" cy="85.8" r="0.8" fill="#fbfbfb"/><circle cx="12.3" cy="87.3" r="1.1" fill="#d0d0d0"/><circle cx="11.8" cy="88.8" r="0.8" fill="#fbfbfb"/><circle cx="359.8" cy="66.3" r="1.1" fill="#cdcdcd"/><circle cx="359.3" cy="67.8" r="0.8" fill="#fbfbfb"/><circle cx="362.8" cy="69.3" r="1.1" fill="#d0d0d0"/><circle cx="362.3" cy="70.8" r="0.8" fill="#fbfbfb"/><circle cx="359.8" cy="72.3" r="1.1" fill="#cdcdcd"/><circle cx="359.3" cy="73.8" r="0.8" fill="#fbfbfb"/><circle cx="362.8" cy="75.3" r="1.1" fill="#d0d0d0"/><circle cx="362.3" cy="76.8" r="0.8" fill="#fbfbfb"/><circle cx="359.8" cy="78.3" r="1.1" fill="#cdcdcd"/><circle cx="359.3" cy="79.8" r="0.8" fill="#fbfbfb"/><circle cx="362.8" cy="81.3" r="1.1" fill="#d0d0d0"/><circle cx="362.3" cy="82.8" r="0.8" fill="#fbfbfb"/><circle cx="359.8" cy="84.3" r="1.1" fill="#cdcdcd"/><circle cx="359.3" cy="85.8" r="0.8" fill="#fbfbfb"/><circle cx="362.8" cy="87.3" r="1.1" fill="#d0d0d0"/><circle cx="362.3" cy="88.8" r="0.8" fill="#fbfbfb"/><g opacity="0.75"><path d="M21,79 L38,67.5" stroke="#5aa8e0" stroke-width="5.5" stroke-linecap="round"/><path d="M21.5,78.5 L37.5,67.5" stroke="#9ad0f8" stroke-width="2.5" stroke-linecap="round"/><path d="M19,81 L23,78" stroke="#b0a890" stroke-width="2"/></g><path d="M24,80 L42,86" stroke="#d8d8d8" stroke-width="1"/><g opacity="0.55"><g><rect x="58" y="67" width="18" height="17.7" rx="1.5" fill="url(#gflop)" stroke="#1e2552" stroke-width="0.9"/><rect x="61" y="67.5" width="12" height="6" fill="#f4f6fc"/><rect x="62" y="68.2" width="2" height="4" fill="#3a4070"/><rect x="60.5" y="75.5" width="13" height="8.7" fill="url(#glabel)"/><path d="M60.5,78H73.5M60.5,81H73.5" stroke="#9da0b8" stroke-width="0.8"/></g></g><circle cx="99.3" cy="67.8" r="3.6" fill="#b06868" stroke="#e8c8c8" stroke-width="1" opacity="0.9"/><circle cx="97.5" cy="80.5" r="3.6" fill="#b06868" stroke="#e8c8c8" stroke-width="1" opacity="0.9"/><circle cx="111" cy="83.3" r="3.6" fill="#b06868" stroke="#e8c8c8" stroke-width="1" opacity="0.9"/><g fill="#6a6a6a" opacity="0.85"><polygon points="143,64 139.5,70.2 146.5,70.2"/><polygon points="143,86.6 139.5,80.4 146.5,80.4"/><polygon points="132.2,75.3 138.4,71.8 138.4,78.8"/><polygon points="153.8,75.3 147.6,71.8 147.6,78.8"/></g><path d="M177.6,69.2 L173.4,83.3 M177.6,69.2 L189.4,67" stroke="#444" stroke-width="1.2" opacity="0.7"/><circle cx="177.6" cy="69.5" r="3.6" fill="#a85858" stroke="#e8c0c0" stroke-width="0.8"/><circle cx="189.4" cy="67" r="3.6" fill="#a85858" stroke="#e8c0c0" stroke-width="0.8"/><circle cx="173.4" cy="83.3" r="3.6" fill="#a85858" stroke="#e8c0c0" stroke-width="0.8"/><path d="M182,74.5 V87 L185,84 L191.5,83 Z" fill="#8a8a8a" opacity="0.8"/><circle cx="218.9" cy="75.3" r="10" fill="#f0f060" opacity="0.55"/><circle cx="218.9" cy="75.3" r="7.3" fill="#8a5050" stroke="#f4f0a0" stroke-width="1.2"/><path d="M216,72.2 L221.8,78.4 M221.8,72.2 L216,78.4" stroke="#fff" stroke-width="2"/><g opacity="0.7"><path d="M257,70 L250,84 M260,72 L256,86" stroke="#a0b8d8" stroke-width="2.2" stroke-linecap="round"/><ellipse cx="255.5" cy="69" rx="2.6" ry="4.2" fill="none" stroke="#e8c020" stroke-width="2"/><ellipse cx="262.5" cy="72.5" rx="3.3" ry="3" fill="none" stroke="#e8c020" stroke-width="2" transform="rotate(40 262.5 72.5)"/></g><g opacity="0.8"><rect x="293.5" y="72" width="11" height="13" fill="#e8c8f0" stroke="#c8a0d8" stroke-width="0.8"/><path d="M295,76H303M295,78.5H303M295,81H303" stroke="#b890c8" stroke-width="0.7"/><path d="M286,68 L294,66 L298,69 L299,79 L288,81 Z" fill="#cfe0f8" stroke="#90a8d0" stroke-width="0.8"/><path d="M288.5,71.5L295,70M289,74L296,72.5M289.5,76.5L296.5,75" stroke="#90a8d0" stroke-width="0.7"/></g><g opacity="0.85"><rect x="320.8" y="65.5" width="13" height="18" fill="#f0c880" stroke="#d0a060" stroke-width="0.8"/><path d="M324,66.5 Q327,62.5 330.5,66.5 Z" fill="#e8e8e8" stroke="#777" stroke-width="0.8"/><path d="M332.5,72 H339.5 L342.5,75 V84.2 H332.5 Z" fill="#dfe8f8" stroke="#7a90c0" stroke-width="0.8"/><path d="M334,76.5H341M334,78.5H341M334,80.5H341M334,82.5H341" stroke="#8aa0c8" stroke-width="0.6"/></g><path d="M388.9,77.7 C386,71 375,68 371.5,76.5" fill="none" stroke="#6a6a6a" stroke-width="2.6"/><polygon points="369.8,79.2 369,72.5 375.5,76.5" fill="#6a6a6a"/><path d="M408.6,77.7 C411.5,71 422.5,68 426,76.5" fill="none" stroke="#6a6a6a" stroke-width="2.6"/><polygon points="427.7,79.2 428.5,72.5 422,76.5" fill="#6a6a6a"/><circle cx="451.7" cy="70.5" r="6" fill="#e06050" stroke="#7a4040" stroke-width="1"/><polygon points="466.70,79.20 462.70,86.13 454.70,86.13 450.70,79.20 454.70,72.27 462.70,72.27" fill="#6aa8e8" stroke="#4a5a6a" stroke-width="1.2"/><path d="M460,66 L463,66.5 L462.5,69.5" fill="none" stroke="#a03020" stroke-width="1"/><rect x="484" y="65.5" width="20" height="20.5" rx="6.0" ry="6.1499999999999995" fill="#8ab8e0" stroke="#4a5a68" stroke-width="1.5"/><rect x="487" y="75.5" width="6.5" height="6.5" fill="#f8f0e8" stroke="#333" stroke-width="1" stroke-dasharray="1.8,1.2" transform="rotate(30 490.2 78.7)"/><path d="M530,65 C538,63 543,67 543,74 C543,80 543,86 537,85.5 C532,85 531,80 528,76 C525,72 522,66 530,65 Z" fill="#8ab8e0" stroke="#4a5a68" stroke-width="1.5"/><circle cx="526.2" cy="81" r="4.8" fill="#f4f4f4" stroke="#555" stroke-width="1.4" stroke-dasharray="2.2,1.6"/><rect x="560.5" y="65.5" width="20" height="20.5" rx="6.0" ry="6.1499999999999995" fill="#8ab8e0" stroke="#4a5a68" stroke-width="1.5"/><circle cx="574" cy="70.5" r="6.8" fill="#c05a48" opacity="0.95"/><path d="M571,67 L577,74 M577,67 L571,74" stroke="#f8e0d8" stroke-width="1.5"/><rect x="563.5" y="76" width="6.5" height="6.5" fill="#f8f0e8" stroke="#333" stroke-width="1" stroke-dasharray="1.8,1.2" transform="rotate(30 566.7 79.2)"/><path d="M606,65 C614,63 619,67 619,74 C619,80 619,86 613,85.5 C608,85 607,80 604,76 C601,72 598,66 606,65 Z" fill="#8ab8e0" stroke="#4a5a68" stroke-width="1.5"/><path d="M600.5,69 C601,64 610,63 616,66 C619,69 618,74 614,76 C608,77 601,75 600.5,69 Z" fill="#b05050"/><path d="M606,67 L613,75 M613,67 L606,75" stroke="#f8d8d8" stroke-width="1.3"/><circle cx="602.2" cy="81" r="4.8" fill="#f4f4f4" stroke="#555" stroke-width="1.4" stroke-dasharray="2.2,1.6"/><path d="M643,69.2 L638.3,83.3 M643,69.2 L654.2,67.4" stroke="#333" stroke-width="1.2"/><path d="M636,79 L660,72 M636,79 L655,86" stroke="#f0f060" stroke-width="1" opacity="0.6"/><circle cx="643" cy="69.2" r="3.6" fill="#a85858" stroke="#e8c0c0" stroke-width="0.8"/><circle cx="654.2" cy="67.4" r="3.6" fill="#a85858" stroke="#e8c0c0" stroke-width="0.8"/><circle cx="638.3" cy="83.3" r="3.6" fill="#a85858" stroke="#e8c0c0" stroke-width="0.8"/><polygon points="651.00,72.00 653.14,76.06 657.66,76.84 654.46,80.12 655.11,84.66 651.00,82.64 646.89,84.66 647.54,80.12 644.34,76.84 648.86,76.06" fill="#f0f040" stroke="#e8e040" stroke-width="0.8" stroke-linejoin="round"/><path d="M672.5,64.5 A22.5,22.5 0 0 1 695,87 H672.5 Z" fill="#c8d8e8" opacity="0.9"/><path d="M672.5,64.5 A22.5,22.5 0 0 1 695,87" fill="none" stroke="#5a6a78" stroke-width="1.6"/><path d="M672.5,74.5 A12.5,12.5 0 0 1 685,87" fill="none" stroke="#3a4650" stroke-width="1.6" stroke-dasharray="2,2"/><polygon points="679.5,73 688,73.5 686.5,82" fill="#3a4650"/><path d="M711,86 L714,80 L718.8,78 M728,76.8 L731,81 L732.5,86" fill="none" stroke="#9a6060" stroke-width="2.2" opacity="0.85"/><circle cx="717.5" cy="67.4" r="2.3" fill="none" stroke="#222" stroke-width="1.2"/><circle cx="715" cy="73.6" r="2.3" fill="none" stroke="#222" stroke-width="1.2"/><path d="M719,69 L727,73 M717,73.5 L727,73 M719,70 L723,78" stroke="#222" stroke-width="1.1"/><path d="M753.5,64.5 H765.5 C770.5,64.5 771.0,70 771.0,75 V82 C771.0,85 767.5,86 764.5,84.5 C762.5,83 759.5,83 757.5,84.5 C754.5,86 749.5,85 749.5,81 V70 C749.5,66 750.5,64.5 753.5,64.5 Z" fill="#f0f0ec" stroke="#3a3a3a" stroke-width="1.4"/><polygon points="754.80,64.80 756.94,68.86 761.46,69.64 758.26,72.92 758.91,77.46 754.80,75.44 750.69,77.46 751.34,72.92 748.14,69.64 752.66,68.86" fill="#f0e040" stroke="#e0d030" stroke-width="0.8" stroke-linejoin="round"/><path d="M791.5,64.5 H803.5 C808.5,64.5 809.0,70 809.0,75 V82 C809.0,85 805.5,86 802.5,84.5 C800.5,83 797.5,83 795.5,84.5 C792.5,86 787.5,85 787.5,81 V70 C787.5,66 788.5,64.5 791.5,64.5 Z" fill="#f0f0ec" stroke="#3a3a3a" stroke-width="1.4"/><polygon points="792.80,64.80 794.94,68.86 799.46,69.64 796.26,72.92 796.91,77.46 792.80,75.44 788.69,77.46 789.34,72.92 786.14,69.64 790.66,68.86" fill="#f0e040" stroke="#e0d030" stroke-width="0.8" stroke-linejoin="round"/><path d="M842,71 A9,9 0 1 0 839,83" fill="none" stroke="#6a98e0" stroke-width="2.6" opacity="0.85"/><polygon points="840,70.5 847,69 846.5,76" fill="#5a88d8" opacity="0.85"/><rect x="9.0" y="101" width="1.6" height="1.6" fill="#a0a0a0" opacity="0.7"/><rect x="9.5" y="102.6" width="1.5" height="1" fill="#ececec"/><rect x="11.7" y="104" width="1.6" height="1.6" fill="#a0a0a0" opacity="0.7"/><rect x="12.2" y="105.6" width="1.5" height="1" fill="#ececec"/><rect x="14.5" y="101" width="1.6" height="1.6" fill="#a0a0a0" opacity="0.7"/><rect x="15.0" y="102.6" width="1.5" height="1" fill="#ececec"/><rect x="17.2" y="104" width="1.6" height="1.6" fill="#a0a0a0" opacity="0.7"/><rect x="17.7" y="105.6" width="1.5" height="1" fill="#ececec"/><rect x="20.0" y="101" width="1.6" height="1.6" fill="#a0a0a0" opacity="0.7"/><rect x="20.5" y="102.6" width="1.5" height="1" fill="#ececec"/><rect x="22.7" y="104" width="1.6" height="1.6" fill="#a0a0a0" opacity="0.7"/><rect x="23.2" y="105.6" width="1.5" height="1" fill="#ececec"/><rect x="25.5" y="101" width="1.6" height="1.6" fill="#a0a0a0" opacity="0.7"/><rect x="26.0" y="102.6" width="1.5" height="1" fill="#ececec"/><rect x="28.2" y="104" width="1.6" height="1.6" fill="#a0a0a0" opacity="0.7"/><rect x="28.7" y="105.6" width="1.5" height="1" fill="#ececec"/><path d="M11.4,122 C12,120.5 14,120.5 16,122 L15,119 C14.2,117 14,115.5 15.5,115.3 C16.5,115.2 17,116.5 17.5,117.5 L18.2,115.6 C19,114.9 20.5,115.2 20.8,116.5 L21.5,118 C22,117.3 23,117.2 23.6,118 L24.8,119.5 C25.6,119.8 26,120.5 25.6,121.5 L24,126.5 L23,129.5 L23.6,131.5 L23,132.2 L14.8,132.4 L14.4,130 L11.9,125.5 Z" fill="url(#ghand)" stroke="#000" stroke-width="1.15" stroke-linejoin="round"/><path d="M16,122 L17,125 M18,118.5 L18.8,121.5 M21.2,119 L21.5,122" stroke="#000" stroke-width="0.8" opacity="0.5"/><polygon points="17.7,149.8 29,161 17.7,172 6.5,161" fill="#7090b4" stroke="#2a3a4a" stroke-width="1"/><path d="M12.5,156 L23,166.2 M23,156 L12.5,166.2" stroke="#eef2f6" stroke-width="3.2"/><g fill="#4a6a90"><polygon points="17.7,151.5 15,155 20.4,155"/><polygon points="17.7,170.5 15,167 20.4,167"/><polygon points="8.2,161 11.7,158.3 11.7,163.7"/><polygon points="27.3,161 23.8,158.3 23.8,163.7"/></g><polygon points="6.2,149.3 20.1,149.3 13,156 10,160 6.2,160.5" fill="#f4e400"/><polygon points="13,156 20,154 17,159 11,160" fill="#f4e400" opacity="0.8"/><path d="M6.2,149.3 H20.1 M6.2,149.3 V160.5" stroke="#222" stroke-width="1" stroke-dasharray="1,1.2"/><path d="M19.87,199.82 L27.27,206.54" stroke="#8a6010" stroke-width="5.2" stroke-linecap="round"/><path d="M19.87,199.82 L27.27,206.54" stroke="#f0c050" stroke-width="3.4" stroke-linecap="round"/><path d="M19.87,199.82 L21.47,201.32" stroke="#555" stroke-width="4" /><circle cx="13.8" cy="194.3" r="7.2" fill="url(#glens)" stroke="#6a6a6a" stroke-width="1.6"/><path d="M7.5,206.6 H15.7 M11.6,202.5 V210.7" stroke="#2a9a2a" stroke-width="3"/><path d="M20.17,238.82 L27.57,245.54" stroke="#8a6010" stroke-width="5.2" stroke-linecap="round"/><path d="M20.17,238.82 L27.57,245.54" stroke="#f0c050" stroke-width="3.4" stroke-linecap="round"/><path d="M20.17,238.82 L21.77,240.32" stroke="#555" stroke-width="4" /><circle cx="14.1" cy="233.3" r="7.2" fill="url(#glens)" stroke="#6a6a6a" stroke-width="1.6"/><rect x="7.5" y="243.8" width="9" height="2.6" fill="#3a9a3a"/><path d="M20.17,275.52 L27.57,282.24" stroke="#8a6010" stroke-width="5.2" stroke-linecap="round"/><path d="M20.17,275.52 L27.57,282.24" stroke="#f0c050" stroke-width="3.4" stroke-linecap="round"/><path d="M20.17,275.52 L21.77,277.02" stroke="#555" stroke-width="4" /><circle cx="14.1" cy="270" r="7.2" fill="url(#glens)" stroke="#6a6a6a" stroke-width="1.6"/><g fill="#2a9a2a"><rect x="6.5" y="278.5" width="3" height="8.5"/><rect x="11.5" y="279.5" width="2.5" height="2.5"/><rect x="11.5" y="284" width="2.5" height="2.5"/><rect x="16" y="278.5" width="3" height="8.5"/></g><path d="M20.17,313.82 L27.57,320.54" stroke="#8a6010" stroke-width="5.2" stroke-linecap="round"/><path d="M20.17,313.82 L27.57,320.54" stroke="#f0c050" stroke-width="3.4" stroke-linecap="round"/><path d="M20.17,313.82 L21.77,315.32" stroke="#555" stroke-width="4" /><circle cx="14.1" cy="308.3" r="7.2" fill="url(#glens)" stroke="#6a6a6a" stroke-width="1.6"/><g stroke="#d02020" stroke-width="1.3" fill="none"><path d="M5,299.5 L8,302.5 M5,299.5 H7.5 M5,299.5 V302"/><path d="M26,299.5 L23,302.5 M26,299.5 H23.5 M26,299.5 V302"/><path d="M5,318 L8,315 M5,318 H7.5 M5,318 V315.5"/></g><path d="M26.5,318 L23,314.5" stroke="#d02020" stroke-width="1.3"/><rect x="8" y="341" width="18" height="15" rx="6" fill="#f0f030" opacity="0.75"/><path d="M20.17,352.22 L27.57,358.94" stroke="#8a6010" stroke-width="5.2" stroke-linecap="round"/><path d="M20.17,352.22 L27.57,358.94" stroke="#f0c050" stroke-width="3.4" stroke-linecap="round"/><path d="M20.17,352.22 L21.77,353.72" stroke="#555" stroke-width="4" /><circle cx="14.1" cy="346.7" r="7.2" fill="url(#glens)" stroke="#6a6a6a" stroke-width="1.6"/><polygon points="7,391 21,391 29,400 12,400" fill="#3a9ae0" stroke="#1a2a40" stroke-width="0.9"/><path d="M20.17,390.52 L27.57,397.24" stroke="#8a6010" stroke-width="5.2" stroke-linecap="round"/><path d="M20.17,390.52 L27.57,397.24" stroke="#f0c050" stroke-width="3.4" stroke-linecap="round"/><path d="M20.17,390.52 L21.77,392.02" stroke="#555" stroke-width="4" /><circle cx="14.1" cy="385" r="7.2" fill="url(#glens)" stroke="#6a6a6a" stroke-width="1.6"/><path d="M20.17,428.82 L27.57,435.54" stroke="#8a6010" stroke-width="5.2" stroke-linecap="round"/><path d="M20.17,428.82 L27.57,435.54" stroke="#f0c050" stroke-width="3.4" stroke-linecap="round"/><path d="M20.17,428.82 L21.77,430.32" stroke="#555" stroke-width="4" /><circle cx="14.1" cy="423.3" r="7.2" fill="url(#glens)" stroke="#6a6a6a" stroke-width="1.6"/><path d="M10,423.3 H18.5 M10,423.3 L13.5,420 M10,423.3 L13.5,426.6" stroke="#c81010" stroke-width="2.2"/><g opacity="0.55"><path d="M16,466 L8.5,473.5" stroke="#8a6010" stroke-width="5" stroke-linecap="round"/><path d="M16,466 L8.5,473.5" stroke="#f0c050" stroke-width="3.2" stroke-linecap="round"/><circle cx="21.7" cy="460.8" r="6.8" fill="url(#glens)" stroke="#6a6a6a" stroke-width="1.5"/><path d="M26,460.8 H17.5 M26,460.8 L22.5,457.5 M26,460.8 L22.5,464.1" stroke="#c81010" stroke-width="2.2"/></g><circle cx="17.5" cy="502.5" r="9" fill="url(#grefresh)" stroke="#1a40b0" stroke-width="1"/><path d="M21.5,499 A5,5 0 1 0 22,505" fill="none" stroke="#fff" stroke-width="2.4"/><polygon points="18.5,503 23.5,502 22.5,507.5" fill="#fff"/><circle cx="45.8" cy="105.8" r="6.8" fill="url(#gdbtn)" stroke="#222" stroke-width="0.6"/><path d="M43.2,103.2 L48.4,108.4 M48.4,103.2 L43.2,108.4" stroke="#fff" stroke-width="1.9"/><circle cx="66" cy="105.8" r="6.8" fill="url(#gdbtn)" stroke="#222" stroke-width="0.6"/><rect x="62.8" y="105.2" width="4.6" height="3.6" fill="none" stroke="#fff" stroke-width="1.1"/><path d="M64.6,105.2 V103.2 H69.2 V106.8 H67.4" fill="none" stroke="#fff" stroke-width="1.1"/><rect x="67" y="126" width="12.5" height="12" rx="2" fill="url(#gchk)" stroke="#3a5a9a" stroke-width="0.9"/><path d="M69.5,131.5 L73,136 L80,124.5" fill="none" stroke="#0a1a40" stroke-width="2.6" stroke-linejoin="round"/><rect x="93.5" y="122" width="20" height="20.5" fill="#eaf2fb"/><rect x="38.5" y="674.5" width="12.5" height="12.5" rx="2.5" fill="url(#gchk0)" stroke="#8a8a8a" stroke-width="0.9"/><rect x="438.5" y="697.5" width="19" height="19" fill="#f6f6f6" stroke="#8a8a8a" stroke-width="1"/><g transform="translate(448,707)"><ellipse cx="-2" cy="-3" rx="3.8" ry="4.8" fill="none" stroke="#222" stroke-width="2" transform="rotate(-30 -2 -3)"/><circle cx="2" cy="3" r="4" fill="none" stroke="#222" stroke-width="2"/><circle cx="2" cy="3" r="1.2" fill="#222"/><path d="M-4,-6 L1,1" stroke="#222" stroke-width="1.5"/><circle cx="5" cy="-5" r="0.7" fill="#555"/><circle cx="-6" cy="3" r="0.7" fill="#555"/></g><path d="M995.5,707 H1000.5 L998,710.5 Z" fill="#333"/><rect x="1012.5" y="697.5" width="19" height="19" fill="#f6f6f6" stroke="#8a8a8a" stroke-width="1"/><path d="M1015,714 C1019,712 1024,707 1029,700 C1029,706 1024,712 1018,714 Z" fill="#4a4a4a"/><circle cx="1019" cy="703.5" r="3.3" fill="none" stroke="#c82020" stroke-width="1.5"/><path d="M1016.8,701.5 L1021.2,705.5" stroke="#c82020" stroke-width="1.4"/><rect x="1038.5" y="700.5" width="13.5" height="12.5" rx="2" fill="url(#gchk)" stroke="#3a5a9a" stroke-width="0.9"/><path d="M1041,706 L1044.5,710.5 L1052,698.5" fill="none" stroke="#0a1a40" stroke-width="2.6" stroke-linejoin="round"/><rect x="1208.5" y="698.5" width="19" height="17.5" fill="#f0f0f0" stroke="#8a8a8a" stroke-width="1"/><circle cx="1218" cy="707.3" r="6.5" fill="#a8a8a8" stroke="#777" stroke-width="1.2"/><circle cx="1218" cy="707.3" r="2.5" fill="#d8d8d8"/><path d="M1211.5,707.3 H1224.5 M1218,700.8 V713.8" stroke="#d0d0d0" stroke-width="1.3"/><rect x="1234.5" y="697.5" width="19" height="18.5" fill="#f8f8f8" stroke="#8a8a8a" stroke-width="1"/><path d="M1244,700.5 L1250,711.5 H1238 Z" fill="#f8f820" stroke="#606000" stroke-width="1" stroke-linejoin="round"/><path d="M1244,703.5 V708" stroke="#000" stroke-width="1.6"/><circle cx="1244" cy="709.8" r="0.9" fill="#000"/><clipPath id="nlclip"><polygon points="865,380 866,364.6 871,343 871,312.4 866,308 856,301.6 854.4,292.5 834.5,292.5 814.6,297.4 793,300.8 784.8,304 774,305.7 764.9,313.2 756.6,327.3 754,339.7 751.6,356.3 748.3,371.2 741,387 732,398 724,402.5 718.7,414 711.5,419.6 703.4,429.5 698,435.8 690,446.5 690.8,457.3 696.2,463.6 711.5,466.3 727.7,467.2 738.5,461 752,454.6 762.7,455.5 773.5,463.6 788,468 786,482.5 788.8,495 793.3,499.6 822,499.6 826.6,488 829.3,466.3 831,432.2 828.4,426.8 836.5,424 849,421.4 855.4,415 857,403.4 858,396 865,390.8"/></clipPath><polygon points="865,380 866,364.6 871,343 871,312.4 866,308 856,301.6 854.4,292.5 834.5,292.5 814.6,297.4 793,300.8 784.8,304 774,305.7 764.9,313.2 756.6,327.3 754,339.7 751.6,356.3 748.3,371.2 741,387 732,398 724,402.5 718.7,414 711.5,419.6 703.4,429.5 698,435.8 690,446.5 690.8,457.3 696.2,463.6 711.5,466.3 727.7,467.2 738.5,461 752,454.6 762.7,455.5 773.5,463.6 788,468 786,482.5 788.8,495 793.3,499.6 822,499.6 826.6,488 829.3,466.3 831,432.2 828.4,426.8 836.5,424 849,421.4 855.4,415 857,403.4 858,396 865,390.8" fill="#676862"/><g clip-path="url(#nlclip)"><rect x="685" y="288" width="190" height="215" filter="url(#mapnoise)" opacity="0.35"/></g><path d="M1269,722 L1279,712 M1273,722 L1279,716 M1277,722 L1279,720" stroke="#999" stroke-width="0.9"/>
</svg>
</body></html>
